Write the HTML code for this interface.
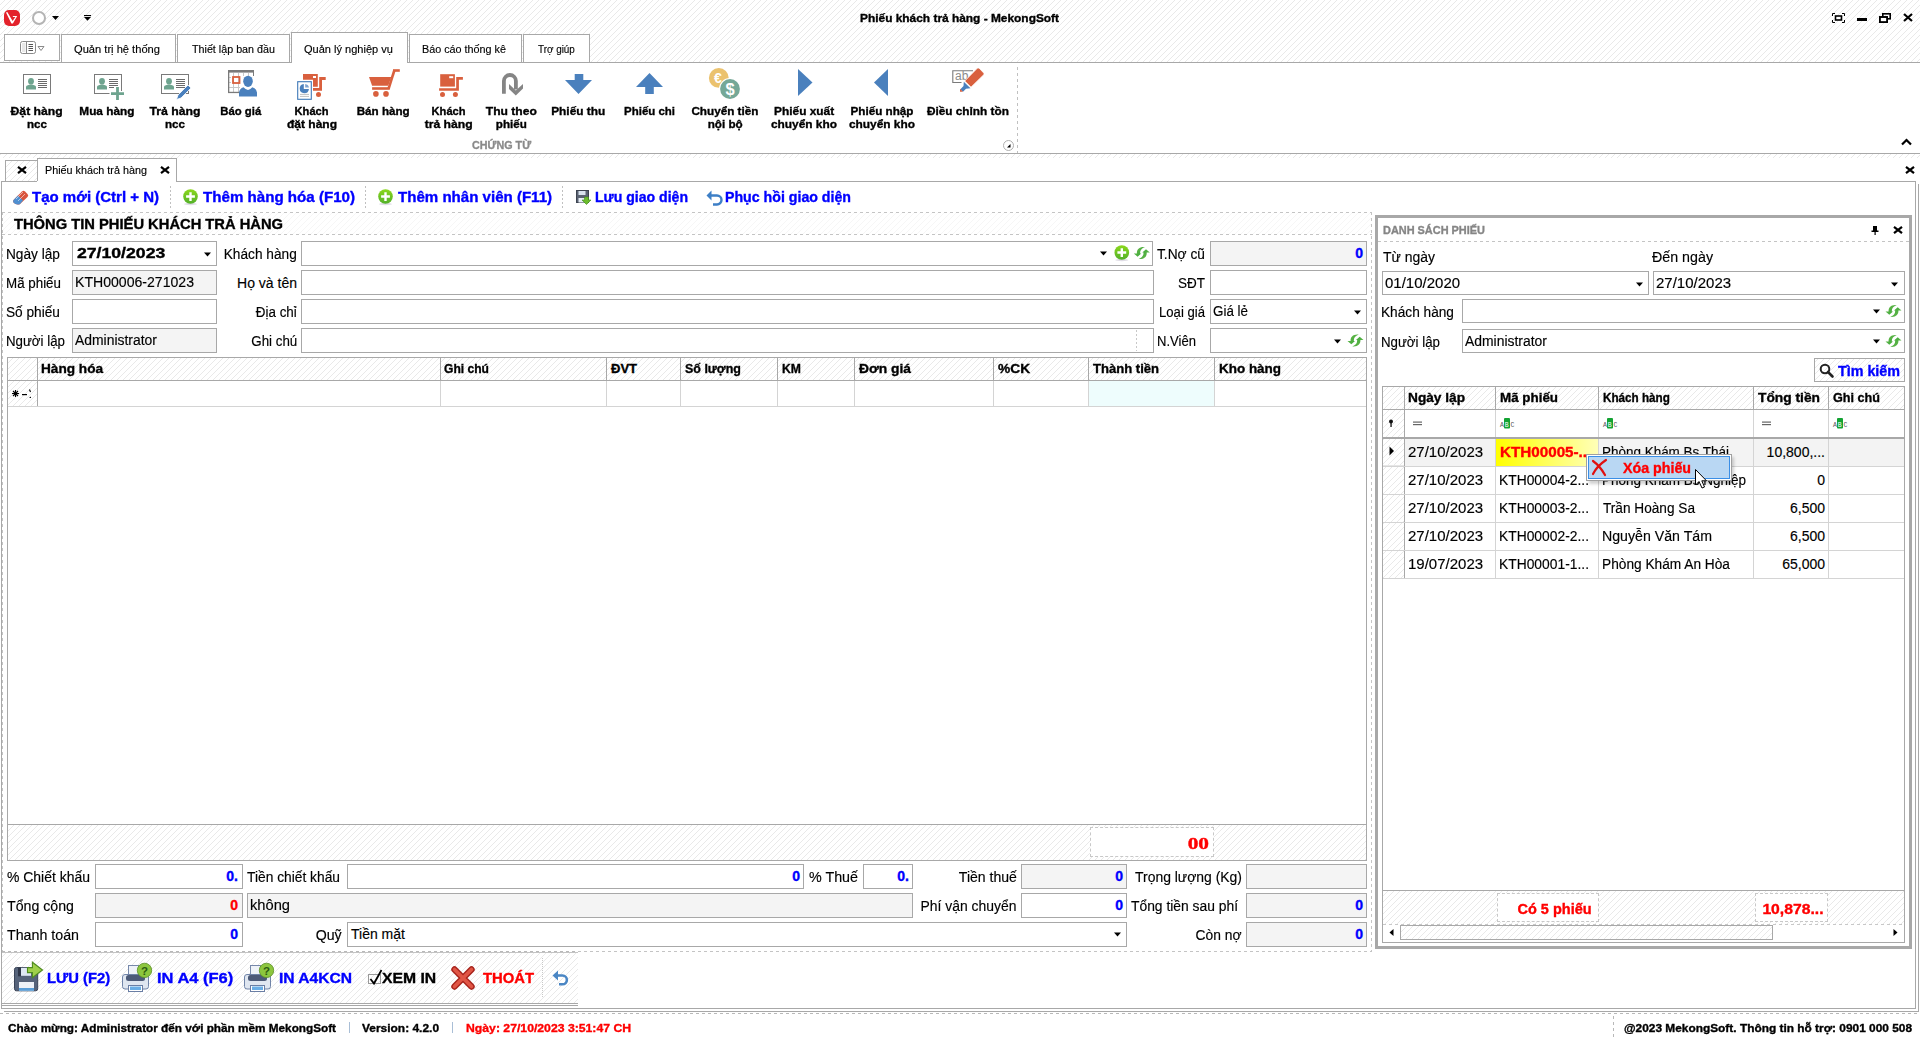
<!DOCTYPE html><html><head><meta charset="utf-8"><style>
html,body{margin:0;padding:0}
body{width:1920px;height:1040px;overflow:hidden;position:relative;background:#fff;font-family:"Liberation Sans",sans-serif;color:#000}
.a{position:absolute;box-sizing:border-box}
svg.a{overflow:visible}
</style></head><body>
<svg width="0" height="0" style="position:absolute"><defs><pattern id="hp" width="6" height="6" patternUnits="userSpaceOnUse"><g fill="#e9e9e9" shape-rendering="crispEdges"><rect x="4" y="0" width="1" height="1"/><rect x="3" y="1" width="1" height="1"/><rect x="2" y="2" width="1" height="1"/><rect x="1" y="3" width="1" height="1"/><rect x="0" y="4" width="1" height="1"/><rect x="5" y="5" width="1" height="1"/></g></pattern><pattern id="hp2" width="6" height="6" patternUnits="userSpaceOnUse"><g fill="#f6f6f6" shape-rendering="crispEdges"><rect x="4" y="0" width="1" height="1"/><rect x="3" y="1" width="1" height="1"/><rect x="2" y="2" width="1" height="1"/><rect x="1" y="3" width="1" height="1"/><rect x="0" y="4" width="1" height="1"/><rect x="5" y="5" width="1" height="1"/></g></pattern><linearGradient id="gplus" x1="0" y1="0" x2="0" y2="1"><stop offset="0" stop-color="#8cd81c"/><stop offset="1" stop-color="#52b02a"/></linearGradient><linearGradient id="grefr" x1="0" y1="0" x2="1" y2="1"><stop offset="0" stop-color="#6ab84a"/><stop offset="1" stop-color="#38a83a"/></linearGradient></defs></svg>
<svg class="a" style="left:0;top:0" width="1920" height="1040"><rect x="0" y="0" width="1920" height="62" fill="url(#hp)"/></svg>
<div class="a" style="left:4px;top:10px;width:16px;height:16px;background:#e3222b;border-radius:5px"></div>
<svg class="a" style="left:4px;top:10px;" width="16" height="16" viewBox="0 0 16 16"><path d="M2 2.6 L3.3 2 L8.6 11 L11.4 7 H8.6 L9.2 5.9 H13.2 L8.9 13.6 H7.4 Z" fill="#fff"/></svg>
<div class="a" style="left:32px;top:11px;width:14px;height:14px;border:2px solid #b4b4b4;border-radius:50%;background:#fff"></div>
<svg class="a" style="left:52px;top:16px;" width="8" height="5" viewBox="0 0 8 5"><path d="M0 0 L7 0 L3.5 4 Z" fill="#000"/></svg>
<svg class="a" style="left:84px;top:15px;" width="8" height="7" viewBox="0 0 8 7"><rect x="0" y="0" width="7" height="1.1" fill="#000"/><path d="M0 2 L7 2 L3.5 5.8 Z" fill="#000"/></svg>
<div id="t9acf1690a6" class="a" style="left:860px;top:12px;font-size:11.5px;font-weight:bold;color:#000;white-space:nowrap;line-height:normal;transform:scaleX(1.0349);transform-origin:left;-webkit-text-stroke:0.35px #000;">Phiếu khách trả hàng - MekongSoft</div>
<svg class="a" style="left:1832px;top:13px;" width="13" height="10" viewBox="0 0 13 10"><path d="M0.5 3 V0.5 H3 M10 0.5 H12.5 V3 M12.5 7 V9.5 H10 M3 9.5 H0.5 V7" stroke="#000" stroke-width="1" fill="none"/><rect x="3.5" y="3" width="6" height="4" stroke="#000" stroke-width="1.6" fill="none"/></svg>
<div class="a" style="left:1857px;top:18px;width:10px;height:3px;background:#000;"></div>
<svg class="a" style="left:1879px;top:13px;" width="12" height="10" viewBox="0 0 12 10"><rect x="3.8" y="0.8" width="7.4" height="5" stroke="#000" stroke-width="1.6" fill="none"/><rect x="0.8" y="4" width="7.4" height="5.2" stroke="#000" stroke-width="1.6" fill="#fff"/><rect x="0.8" y="4" width="7.4" height="5.2" stroke="#000" stroke-width="1.6" fill="none"/></svg>
<svg class="a" style="left:1903px;top:13px;" width="10" height="9" viewBox="0 0 10 9"><path d="M1 1 L9 8 M9 1 L1 8" stroke="#000" stroke-width="2.2"/></svg>
<div class="a" style="left:0px;top:62px;width:1920px;height:1px;background:#a8a8a8;"></div>
<div class="a" style="left:4px;top:34px;width:56px;height:27px;border:1px solid #a8a8a8;background:#fff;"></div>
<svg class="a" style="left:20px;top:41px;" width="26" height="14" viewBox="0 0 26 14"><rect x="0.5" y="0.5" width="15" height="12" rx="2" fill="#fff" stroke="#8a8a8a"/><rect x="2" y="2" width="3.5" height="9" fill="#e8e8e8"/><line x1="6.5" y1="0.5" x2="6.5" y2="12.5" stroke="#8a8a8a"/><g stroke="#555"><line x1="8.5" y1="3.5" x2="13" y2="3.5"/><line x1="8.5" y1="5.5" x2="13" y2="5.5"/><line x1="8.5" y1="7.5" x2="13" y2="7.5"/><line x1="8.5" y1="9.5" x2="13" y2="9.5"/></g><path d="M18 5.5 L24 5.5 L21 9.5 Z" fill="#fff" stroke="#8a8a8a"/></svg>
<div class="a" style="left:61px;top:34px;width:115px;height:28px;border:1px solid #a8a8a8;border-bottom:none;background:#fff"></div>
<div id="tf01adc5968" class="a" style="left:74px;top:42.5px;font-size:11.5px;font-weight:normal;color:#000;white-space:nowrap;line-height:normal;transform:scaleX(0.9673);transform-origin:left;-webkit-text-stroke:0.15px #000;">Quản trị hệ thống</div>
<div class="a" style="left:177px;top:34px;width:113px;height:28px;border:1px solid #a8a8a8;border-bottom:none;background:#fff"></div>
<div id="tb4634eaf07" class="a" style="left:192px;top:42.5px;font-size:11.5px;font-weight:normal;color:#000;white-space:nowrap;line-height:normal;transform:scaleX(0.9331);transform-origin:left;-webkit-text-stroke:0.15px #000;">Thiết lập ban đầu</div>
<div class="a" style="left:291px;top:32px;width:117px;height:31px;border:1px solid #a8a8a8;border-bottom:none;background:#fff"></div>
<div id="t880712f308" class="a" style="left:304px;top:42.5px;font-size:11.5px;font-weight:normal;color:#000;white-space:nowrap;line-height:normal;transform:scaleX(0.9596);transform-origin:left;-webkit-text-stroke:0.15px #000;">Quản lý nghiệp vụ</div>
<div class="a" style="left:409px;top:34px;width:113px;height:28px;border:1px solid #a8a8a8;border-bottom:none;background:#fff"></div>
<div id="t1de477bee1" class="a" style="left:422px;top:42.5px;font-size:11.5px;font-weight:normal;color:#000;white-space:nowrap;line-height:normal;transform:scaleX(0.9377);transform-origin:left;-webkit-text-stroke:0.15px #000;">Báo cáo thống kê</div>
<div class="a" style="left:523px;top:34px;width:67px;height:28px;border:1px solid #a8a8a8;border-bottom:none;background:#fff"></div>
<div id="t7ae4ae71cf" class="a" style="left:538px;top:42.5px;font-size:11.5px;font-weight:normal;color:#000;white-space:nowrap;line-height:normal;transform:scaleX(0.8591);transform-origin:left;-webkit-text-stroke:0.15px #000;">Trợ giúp</div>
<div class="a" style="left:0px;top:63px;width:1920px;height:90px;background:#fff;"></div>
<div class="a" style="left:0px;top:153px;width:1920px;height:1px;background:#a8a8a8;"></div>
<div class="a" style="left:-463px;width:1000px;text-align:center;top:105px;font-size:11.5px;font-weight:bold;color:#000;white-space:nowrap;line-height:normal;-webkit-text-stroke:0.35px #000;"><span id="t55a9dc4afd" style="display:inline-block;transform:scaleX(1.0580);transform-origin:center;">Đặt hàng</span></div>
<div class="a" style="left:-463px;width:1000px;text-align:center;top:117.5px;font-size:11.5px;font-weight:bold;color:#000;white-space:nowrap;line-height:normal;-webkit-text-stroke:0.35px #000;"><span id="t231f23aa69" style="display:inline-block;transform:scaleX(1.0091);transform-origin:center;">ncc</span></div>
<div class="a" style="left:-393px;width:1000px;text-align:center;top:105px;font-size:11.5px;font-weight:bold;color:#000;white-space:nowrap;line-height:normal;-webkit-text-stroke:0.35px #000;"><span id="tdae9a6cce8" style="display:inline-block;transform:scaleX(1.0252);transform-origin:center;">Mua hàng</span></div>
<div class="a" style="left:-325px;width:1000px;text-align:center;top:105px;font-size:11.5px;font-weight:bold;color:#000;white-space:nowrap;line-height:normal;-webkit-text-stroke:0.35px #000;"><span id="ta89ea311f0" style="display:inline-block;transform:scaleX(1.0652);transform-origin:center;">Trả hàng</span></div>
<div class="a" style="left:-325px;width:1000px;text-align:center;top:117.5px;font-size:11.5px;font-weight:bold;color:#000;white-space:nowrap;line-height:normal;-webkit-text-stroke:0.35px #000;"><span id="tcacfb6517b" style="display:inline-block;transform:scaleX(1.0091);transform-origin:center;">ncc</span></div>
<div class="a" style="left:-259px;width:1000px;text-align:center;top:105px;font-size:11.5px;font-weight:bold;color:#000;white-space:nowrap;line-height:normal;-webkit-text-stroke:0.35px #000;"><span id="t0cdbebff42" style="display:inline-block;transform:scaleX(0.9865);transform-origin:center;">Báo giá</span></div>
<div class="a" style="left:-188px;width:1000px;text-align:center;top:105px;font-size:11.5px;font-weight:bold;color:#000;white-space:nowrap;line-height:normal;-webkit-text-stroke:0.35px #000;"><span id="td6917ba26a" style="display:inline-block;transform:scaleX(0.9661);transform-origin:center;">Khách</span></div>
<div class="a" style="left:-188px;width:1000px;text-align:center;top:117.5px;font-size:11.5px;font-weight:bold;color:#000;white-space:nowrap;line-height:normal;-webkit-text-stroke:0.35px #000;"><span id="te2b9d258f3" style="display:inline-block;transform:scaleX(1.0443);transform-origin:center;">đặt hàng</span></div>
<div class="a" style="left:-117px;width:1000px;text-align:center;top:105px;font-size:11.5px;font-weight:bold;color:#000;white-space:nowrap;line-height:normal;-webkit-text-stroke:0.35px #000;"><span id="tada9c68e19" style="display:inline-block;transform:scaleX(1.0119);transform-origin:center;">Bán hàng</span></div>
<div class="a" style="left:-51px;width:1000px;text-align:center;top:105px;font-size:11.5px;font-weight:bold;color:#000;white-space:nowrap;line-height:normal;-webkit-text-stroke:0.35px #000;"><span id="t31ae3468ef" style="display:inline-block;transform:scaleX(0.9661);transform-origin:center;">Khách</span></div>
<div class="a" style="left:-51px;width:1000px;text-align:center;top:117.5px;font-size:11.5px;font-weight:bold;color:#000;white-space:nowrap;line-height:normal;-webkit-text-stroke:0.35px #000;"><span id="tea96763d51" style="display:inline-block;transform:scaleX(1.0592);transform-origin:center;">trả hàng</span></div>
<div class="a" style="left:11px;width:1000px;text-align:center;top:105px;font-size:11.5px;font-weight:bold;color:#000;white-space:nowrap;line-height:normal;-webkit-text-stroke:0.35px #000;"><span id="t77398556a0" style="display:inline-block;transform:scaleX(1.0516);transform-origin:center;">Thu theo</span></div>
<div class="a" style="left:11px;width:1000px;text-align:center;top:117.5px;font-size:11.5px;font-weight:bold;color:#000;white-space:nowrap;line-height:normal;-webkit-text-stroke:0.35px #000;"><span id="tab5888f793" style="display:inline-block;transform:scaleX(1.0111);transform-origin:center;">phiếu</span></div>
<div class="a" style="left:78px;width:1000px;text-align:center;top:105px;font-size:11.5px;font-weight:bold;color:#000;white-space:nowrap;line-height:normal;-webkit-text-stroke:0.35px #000;"><span id="tebc02f1db3" style="display:inline-block;transform:scaleX(1.0313);transform-origin:center;">Phiếu thu</span></div>
<div class="a" style="left:150px;width:1000px;text-align:center;top:105px;font-size:11.5px;font-weight:bold;color:#000;white-space:nowrap;line-height:normal;-webkit-text-stroke:0.35px #000;"><span id="t1d22867a31" style="display:inline-block;transform:scaleX(0.9975);transform-origin:center;">Phiếu chi</span></div>
<div class="a" style="left:225px;width:1000px;text-align:center;top:105px;font-size:11.5px;font-weight:bold;color:#000;white-space:nowrap;line-height:normal;-webkit-text-stroke:0.35px #000;"><span id="tc2b760e256" style="display:inline-block;transform:scaleX(1.0183);transform-origin:center;">Chuyển tiền</span></div>
<div class="a" style="left:225px;width:1000px;text-align:center;top:117.5px;font-size:11.5px;font-weight:bold;color:#000;white-space:nowrap;line-height:normal;-webkit-text-stroke:0.35px #000;"><span id="t822d6a9389" style="display:inline-block;transform:scaleX(1.0149);transform-origin:center;">nội bộ</span></div>
<div class="a" style="left:304px;width:1000px;text-align:center;top:105px;font-size:11.5px;font-weight:bold;color:#000;white-space:nowrap;line-height:normal;-webkit-text-stroke:0.35px #000;"><span id="tdf53e3e145" style="display:inline-block;transform:scaleX(1.0323);transform-origin:center;">Phiếu xuất</span></div>
<div class="a" style="left:304px;width:1000px;text-align:center;top:117.5px;font-size:11.5px;font-weight:bold;color:#000;white-space:nowrap;line-height:normal;-webkit-text-stroke:0.35px #000;"><span id="t859ec4969e" style="display:inline-block;transform:scaleX(1.0333);transform-origin:center;">chuyển kho</span></div>
<div class="a" style="left:382px;width:1000px;text-align:center;top:105px;font-size:11.5px;font-weight:bold;color:#000;white-space:nowrap;line-height:normal;-webkit-text-stroke:0.35px #000;"><span id="te16a439aa1" style="display:inline-block;transform:scaleX(1.0167);transform-origin:center;">Phiếu nhập</span></div>
<div class="a" style="left:382px;width:1000px;text-align:center;top:117.5px;font-size:11.5px;font-weight:bold;color:#000;white-space:nowrap;line-height:normal;-webkit-text-stroke:0.35px #000;"><span id="tb4d15a2058" style="display:inline-block;transform:scaleX(1.0333);transform-origin:center;">chuyển kho</span></div>
<div class="a" style="left:468px;width:1000px;text-align:center;top:105px;font-size:11.5px;font-weight:bold;color:#000;white-space:nowrap;line-height:normal;-webkit-text-stroke:0.35px #000;"><span id="t8eaa29afa5" style="display:inline-block;transform:scaleX(1.0271);transform-origin:center;">Điều chỉnh tồn</span></div>
<div class="a" style="left:2px;width:1000px;text-align:center;top:139px;font-size:11.5px;font-weight:bold;color:#8a8a8a;white-space:nowrap;line-height:normal;-webkit-text-stroke:0.35px #8a8a8a;"><span id="t2bfa6932de" style="display:inline-block;transform:scaleX(0.9329);transform-origin:center;">CHỨNG TỪ</span></div>
<div class="a" style="left:1017px;top:67px;width:1px;height:86px;background:repeating-linear-gradient(180deg,#c0c0c0 0 3px,transparent 3px 6px)"></div>
<div class="a" style="left:1003px;top:140px;width:11px;height:11px;border:1px solid #b0b0b0;border-radius:50%"></div>
<svg class="a" style="left:1006px;top:143px;" width="6" height="6" viewBox="0 0 6 6"><path d="M4.5 1 L4.5 4.5 L1 4.5 Z" fill="#000"/></svg>
<svg class="a" style="left:1901px;top:138px;" width="11" height="8" viewBox="0 0 11 8"><path d="M1 6.5 L5.5 2 L10 6.5" stroke="#000" stroke-width="2.2" fill="none"/></svg>
<svg class="a" style="left:0;top:0" width="1920" height="1040" viewBox="0 0 1920 1040"><rect x="23.5" y="74.5" width="27" height="19" fill="#fff" stroke="#7a7a7a"/><ellipse cx="31" cy="81.3" rx="2.9" ry="3.2" fill="#6ea48f"/><path d="M26 89.5 V86.8 Q26 85.6 28.5 85 L30 84.6 H32 L33.5 85 Q36 85.6 36 86.8 V89.5 Z" fill="#6ea48f"/><line x1="38" x2="47" y1="79.5" y2="79.5" stroke="#6a6a6a"/><line x1="38" x2="47" y1="81.5" y2="81.5" stroke="#6a6a6a"/><line x1="38" x2="47" y1="83.5" y2="83.5" stroke="#6a6a6a"/><line x1="38" x2="47" y1="85.5" y2="85.5" stroke="#6a6a6a"/><line x1="38" x2="47" y1="87.5" y2="87.5" stroke="#6a6a6a"/><rect x="94.5" y="74.5" width="27" height="19" fill="#fff" stroke="#7a7a7a"/><ellipse cx="102" cy="81.3" rx="2.9" ry="3.2" fill="#6ea48f"/><path d="M97 89.5 V86.8 Q97 85.6 99.5 85 L101 84.6 H103 L104.5 85 Q107 85.6 107 86.8 V89.5 Z" fill="#6ea48f"/><line x1="109" x2="118" y1="79.5" y2="79.5" stroke="#6a6a6a"/><line x1="109" x2="118" y1="81.5" y2="81.5" stroke="#6a6a6a"/><line x1="109" x2="118" y1="83.5" y2="83.5" stroke="#6a6a6a"/><line x1="109" x2="118" y1="85.5" y2="85.5" stroke="#6a6a6a"/><line x1="109" x2="118" y1="87.5" y2="87.5" stroke="#6a6a6a"/><path d="M109.5 93.5 H123 M116.5 86.5 V100" stroke="#fff" stroke-width="5"/><path d="M111 93.6 H124 M117.5 87 V100" stroke="#6ea48f" stroke-width="2.8"/><rect x="161.5" y="74.5" width="27" height="19" fill="#fff" stroke="#7a7a7a"/><ellipse cx="169" cy="81.3" rx="2.9" ry="3.2" fill="#6ea48f"/><path d="M164 89.5 V86.8 Q164 85.6 166.5 85 L168 84.6 H170 L171.5 85 Q174 85.6 174 86.8 V89.5 Z" fill="#6ea48f"/><line x1="176" x2="185" y1="79.5" y2="79.5" stroke="#6a6a6a"/><line x1="176" x2="185" y1="81.5" y2="81.5" stroke="#6a6a6a"/><line x1="176" x2="185" y1="83.5" y2="83.5" stroke="#6a6a6a"/><line x1="176" x2="185" y1="85.5" y2="85.5" stroke="#6a6a6a"/><line x1="176" x2="185" y1="87.5" y2="87.5" stroke="#6a6a6a"/><path d="M176.5 99.5 L178 95 L188 85 L191 88 L181 98 Z" fill="#4a80bd" stroke="#fff" stroke-width="0.8"/><g stroke="#c8c8c8" stroke-width="1"><line x1="229" y1="87.5" x2="240" y2="87.5"/><line x1="233.5" y1="73" x2="233.5" y2="92"/><line x1="238.5" y1="73" x2="238.5" y2="92"/><line x1="243.5" y1="73" x2="243.5" y2="76"/><line x1="248.5" y1="73" x2="248.5" y2="76"/><line x1="229" y1="77.5" x2="231" y2="77.5"/><line x1="229" y1="82.5" x2="231" y2="82.5"/></g><rect x="228" y="70" width="26" height="2.6" fill="#7a7a7a"/><rect x="228" y="70" width="1.3" height="23" fill="#7a7a7a"/><rect x="228" y="91.8" width="12" height="1.3" fill="#7a7a7a"/><rect x="253" y="70" width="1" height="6" fill="#7a7a7a"/><rect x="233" y="77" width="6.5" height="6" fill="none" stroke="#d9603e" stroke-width="1.8"/><ellipse cx="248" cy="81.3" rx="4.8" ry="5.6" fill="#4a80bd"/><path d="M239 96.6 V92.5 Q239.5 88.5 243.5 87.3 Q246 90 248 90 Q250 90 252.3 87.3 Q256.5 88.5 257 92.5 V96.6 Z" fill="#4a80bd"/><rect x="440.2" y="74.2" width="14.7" height="12.4" fill="#d9603e"/><rect x="449.2" y="76.2" width="4" height="2" fill="#fff"/><path d="M456.2 88.2 V77.10000000000001 H462.9 V79.8 H458.9 V90.80000000000001 H439.09999999999997 V88.2 Z" fill="#d9603e"/><circle cx="442.5" cy="94.5" r="2.5" fill="#d9603e"/><circle cx="455.4" cy="94.5" r="2.5" fill="#d9603e"/><path d="M303 74.1 H317.8 V86.8 H313 V79.8 H303 Z" fill="#d9603e"/><rect x="313" y="76" width="3" height="2" fill="#fff"/><path d="M319.2 90.7 V77 H325.7 V80 H322 V90.7 H313 V88.1 H319.2 Z" fill="#d9603e"/><circle cx="318.5" cy="94.5" r="2.5" fill="#d9603e"/><rect x="297.7" y="81.7" width="13.6" height="17.6" fill="#fff" stroke="#3f79b8" stroke-width="1.1"/><path d="M303.8 84 V88.9 H308.9 A4.6 4.6 0 1 1 303.8 84 Z" fill="#4a80bd"/><path d="M305.2 84 A4.5 4.5 0 0 1 309 87.6 H305.2 Z" fill="#7ea3cf"/><line x1="300" y1="94.4" x2="309" y2="94.4" stroke="#c0c0c0"/><line x1="300" y1="96.4" x2="309" y2="96.4" stroke="#c0c0c0"/><path d="M369 77.1 H391.3 L388.2 85.8 H372.1 Z" fill="#d9603e"/><path d="M394.3 70.5 L388.5 89" stroke="#d9603e" stroke-width="2.6"/><rect x="393" y="69.2" width="6.8" height="2.6" fill="#d9603e"/><rect x="372.1" y="87.2" width="17.5" height="2.6" fill="#d9603e"/><circle cx="375.9" cy="93.9" r="2.8" fill="#d9603e"/><circle cx="386" cy="93.9" r="2.8" fill="#d9603e"/><path d="M503.9 93.8 V81 A6 6 0 0 1 515.9 81 V89.5" stroke="#858585" stroke-width="3.8" fill="none"/><path d="M509 84 L515.8 90.6 L523 84 V88.6 L515.8 95.6 L509 88.9 Z" fill="#858585"/><path d="M574.7 74 H583.3 V80 H592 L578.5 94 L565 80 H574.7 Z" fill="#4a80bd"/><path d="M645.2 94 H653.8 V87 H663 L649.5 73 L636 87 H645.2 Z" fill="#4a80bd"/><circle cx="718.8" cy="77.9" r="9.9" fill="#ebc26e"/><circle cx="730" cy="89" r="11" fill="#fff"/><circle cx="730" cy="89" r="9.9" fill="#75a897"/><text x="718" y="82.8" font-size="14" font-weight="bold" fill="#fff" text-anchor="middle" font-family="Liberation Sans">€</text><text x="730.2" y="94.6" font-size="16.5" font-weight="bold" fill="#fff" text-anchor="middle" font-family="Liberation Sans">$</text><path d="M798 69 L812.5 82.5 L798 96 Z" fill="#4a80bd"/><path d="M888 69 L874 82.5 L888 96 Z" fill="#4a80bd"/><path d="M961.5 82.5 H952.8 V70.8 H973" fill="none" stroke="#7a7a7a" stroke-width="1.1"/><text x="955" y="80" font-size="12" fill="#8a8a8a" font-family="Liberation Sans">ab</text><path d="M964.7 81 L977.5 68 H979 L984 73.3 V74.5 L971 87.2 Z" fill="#d9603e" stroke="#fff" stroke-width="0.8"/><path d="M963.8 81.8 L970.5 88.2 L966 88.8 L963 91.8 L960.2 89.4 L963.5 86 Z" fill="#4a80bd"/><path d="M960 88.8 L963 91.8 H960 Z" fill="#d9603e"/></svg>
<svg class="a" style="left:0;top:0" width="1920" height="1040"><rect x="0" y="154" width="1920" height="4" fill="url(#hp)"/></svg>
<div class="a" style="left:5px;top:160px;width:33px;height:22px;border:1px solid #a8a8a8;border-bottom:none;background:#fff"></div>
<svg class="a" style="left:0;top:0" width="1920" height="1040"><rect x="6" y="161" width="31" height="20" fill="url(#hp)"/></svg>
<div class="a" style="left:37px;top:158px;width:140px;height:24px;border:1px solid #a8a8a8;border-bottom:none;background:#fff"></div>
<svg class="a" style="left:17px;top:166px;" width="10" height="8" viewBox="0 0 10 8"><path d="M1 0.8 L9 7.2 M9 0.8 L1 7.2" stroke="#000" stroke-width="2.2"/></svg>
<div id="t5c109f1d9e" class="a" style="left:45px;top:164px;font-size:11.5px;font-weight:normal;color:#000;white-space:nowrap;line-height:normal;transform:scaleX(0.9378);transform-origin:left;-webkit-text-stroke:0.15px #000;">Phiếu khách trả hàng</div>
<svg class="a" style="left:160px;top:166px;" width="10" height="8" viewBox="0 0 10 8"><path d="M1 0.8 L9 7.2 M9 0.8 L1 7.2" stroke="#000" stroke-width="2.2"/></svg>
<svg class="a" style="left:1905px;top:166px;" width="10" height="8" viewBox="0 0 10 8"><path d="M1 0.8 L9 7.2 M9 0.8 L1 7.2" stroke="#000" stroke-width="2.2"/></svg>
<div class="a" style="left:1px;top:181px;width:176px;height:1px;background:#a8a8a8;"></div>
<div class="a" style="left:176px;top:181px;width:1740px;height:1px;background:#a8a8a8;"></div>
<div class="a" style="left:37px;top:181px;width:1px;height:1px;background:#fff;"></div>
<div class="a" style="left:38px;top:181px;width:138px;height:1px;background:#fff;"></div>
<div class="a" style="left:1px;top:181px;width:1px;height:828px;background:#a8a8a8;"></div>
<div class="a" style="left:1915px;top:181px;width:1px;height:828px;background:#a8a8a8;"></div>
<div class="a" style="left:1918px;top:184px;width:1px;height:828px;background:#a8a8a8;"></div>
<div class="a" style="left:1px;top:1008px;width:1915px;height:1px;background:#a8a8a8;"></div>
<div class="a" style="left:4px;top:1011px;width:1915px;height:1px;background:#a8a8a8;"></div>
<svg class="a" style="left:0;top:0" width="1920" height="1040" viewBox="0 0 1920 1040"><g transform="translate(13,190)"><path d="M1 9.5 L9 1.5 Q10.5 0 12 1.5 L14.5 4 Q16 5.5 14.5 7 L7 14 Q6 14.8 4.5 14.5 L2.5 14 Q0 13 0 11 Z" fill="#d9543c"/><path d="M1 9.5 L5 5.5 L10 10.5 L7 14 Q6 14.8 4.5 14.5 L2.5 14 Q0 13 0 11 Z" fill="#4f8fd0"/><path d="M3 9 L10 2 M5 11 L12 4" stroke="#fff" stroke-width="0.9" opacity="0.6"/></g><ellipse cx="190.5" cy="204.0" rx="6.5" ry="1.2" fill="#d8d4e0" opacity="0.8"/><circle cx="190.5" cy="196.5" r="7.3" fill="url(#gplus)"/><path d="M186.1 196.5 H194.9 M190.5 192.2 V201.0" stroke="#fff" stroke-width="2.4"/><ellipse cx="385.5" cy="204.0" rx="6.5" ry="1.2" fill="#d8d4e0" opacity="0.8"/><circle cx="385.5" cy="196.5" r="7.3" fill="url(#gplus)"/><path d="M381.1 196.5 H389.9 M385.5 192.2 V201.0" stroke="#fff" stroke-width="2.4"/><g transform="translate(576,190)"><rect x="0.5" y="0.5" width="12" height="12" fill="#5a6272" stroke="#3c4350"/><rect x="2.5" y="1" width="7" height="4" fill="#d8e2ee"/><rect x="2.5" y="8" width="8" height="4.5" fill="#e8eef6"/><path d="M8.5 7 H12.5 V10 H15 L10.5 14.5 L6 10 H8.5 Z" fill="#6cbc2c" stroke="#3c8a1c" stroke-width="0.6"/></g><path d="M710 195.5 H717 A4.5 4.5 0 0 1 717 204.5 H713" stroke="#3d7fc6" stroke-width="2.4" fill="none"/><path d="M706.5 195.5 L711.5 190.5 V200.5 Z" fill="#3d7fc6"/></svg>
<div id="t37e34caacc" class="a" style="left:32px;top:189px;font-size:14px;font-weight:bold;color:#0000ff;white-space:nowrap;line-height:normal;transform:scaleX(1.0726);transform-origin:left;-webkit-text-stroke:0.35px #0000ff;">Tạo mới (Ctrl + N)</div>
<div id="ta052397b76" class="a" style="left:203px;top:189px;font-size:14px;font-weight:bold;color:#0000ff;white-space:nowrap;line-height:normal;transform:scaleX(1.0801);transform-origin:left;-webkit-text-stroke:0.35px #0000ff;">Thêm hàng hóa (F10)</div>
<div id="tb8971b6aa7" class="a" style="left:398px;top:189px;font-size:14px;font-weight:bold;color:#0000ff;white-space:nowrap;line-height:normal;transform:scaleX(1.0764);transform-origin:left;-webkit-text-stroke:0.35px #0000ff;">Thêm nhân viên (F11)</div>
<div id="t8f6391b8eb" class="a" style="left:595px;top:189px;font-size:14px;font-weight:bold;color:#0000ff;white-space:nowrap;line-height:normal;transform:scaleX(1.0044);transform-origin:left;-webkit-text-stroke:0.35px #0000ff;">Lưu giao diện</div>
<div id="tf4bf41d49b" class="a" style="left:725px;top:189px;font-size:14px;font-weight:bold;color:#0000ff;white-space:nowrap;line-height:normal;transform:scaleX(1.0125);transform-origin:left;-webkit-text-stroke:0.35px #0000ff;">Phục hồi giao diện</div>
<div class="a" style="left:170px;top:186px;width:1px;height:23px;background:repeating-linear-gradient(180deg,#c0c0c0 0 2px,transparent 2px 4px)"></div>
<div class="a" style="left:365px;top:186px;width:1px;height:23px;background:repeating-linear-gradient(180deg,#c0c0c0 0 2px,transparent 2px 4px)"></div>
<div class="a" style="left:562px;top:186px;width:1px;height:23px;background:repeating-linear-gradient(180deg,#c0c0c0 0 2px,transparent 2px 4px)"></div>
<div class="a" style="left:2px;top:212px;width:1370px;height:1px;background:repeating-linear-gradient(90deg,#c4c4c4 0 3px,transparent 3px 6px)"></div>
<svg class="a" style="left:0;top:0" width="1920" height="1040"><rect x="3" y="213" width="1368" height="21" fill="url(#hp2)"/></svg>
<div class="a" style="left:2px;top:234px;width:1370px;height:1px;background:repeating-linear-gradient(90deg,#c4c4c4 0 3px,transparent 3px 6px)"></div>
<div class="a" style="left:2px;top:212px;width:1px;height:740px;background:repeating-linear-gradient(180deg,#c4c4c4 0 3px,transparent 3px 6px)"></div>
<div class="a" style="left:1371px;top:212px;width:1px;height:740px;background:repeating-linear-gradient(180deg,#c4c4c4 0 3px,transparent 3px 6px)"></div>
<div class="a" style="left:2px;top:951px;width:1370px;height:1px;background:repeating-linear-gradient(90deg,#c4c4c4 0 3px,transparent 3px 6px)"></div>
<div id="t560496b2e6" class="a" style="left:14px;top:216px;font-size:14px;font-weight:bold;color:#000;white-space:nowrap;line-height:normal;transform:scaleX(1.0514);transform-origin:left;-webkit-text-stroke:0.35px #000;">THÔNG TIN PHIẾU KHÁCH TRẢ HÀNG</div>
<div id="tafaf20e180" class="a" style="left:6px;top:246px;font-size:14px;font-weight:normal;color:#000;white-space:nowrap;line-height:normal;transform:scaleX(0.9767);transform-origin:left;-webkit-text-stroke:0.15px #000;">Ngày lập</div>
<div id="t20781a275e" class="a" style="left:6px;top:275px;font-size:14px;font-weight:normal;color:#000;white-space:nowrap;line-height:normal;transform:scaleX(0.9542);transform-origin:left;-webkit-text-stroke:0.15px #000;">Mã phiếu</div>
<div id="t174889c864" class="a" style="left:6px;top:304px;font-size:14px;font-weight:normal;color:#000;white-space:nowrap;line-height:normal;transform:scaleX(0.9764);transform-origin:left;-webkit-text-stroke:0.15px #000;">Số phiếu</div>
<div id="t8c735c6379" class="a" style="left:6px;top:333px;font-size:14px;font-weight:normal;color:#000;white-space:nowrap;line-height:normal;transform:scaleX(0.9486);transform-origin:left;-webkit-text-stroke:0.15px #000;">Người lập</div>
<div class="a" style="left:72px;top:241px;width:145px;height:25px;border:1px solid #a8a8a8;background:#fff;"></div>
<div id="tc82d08be5d" class="a" style="left:77px;top:245px;font-size:14px;font-weight:bold;color:#000;white-space:nowrap;line-height:normal;transform:scaleX(1.2594);transform-origin:left;-webkit-text-stroke:0.35px #000;">27/10/2023</div>
<svg class="a" style="left:204px;top:252px;" width="8" height="5" viewBox="0 0 8 5"><path d="M0 0.5 H7 L3.5 4.5 Z" fill="#000"/></svg>
<div class="a" style="left:72px;top:270px;width:145px;height:25px;border:1px solid #a8a8a8;background:#f4f4f4;"></div>
<div id="t7639b18e96" class="a" style="left:75px;top:274px;font-size:14px;font-weight:normal;color:#000;white-space:nowrap;line-height:normal;transform:scaleX(1.0059);transform-origin:left;-webkit-text-stroke:0.15px #000;">KTH00006-271023</div>
<div class="a" style="left:72px;top:299px;width:145px;height:25px;border:1px solid #a8a8a8;background:#fff;"></div>
<div class="a" style="left:72px;top:328px;width:145px;height:25px;border:1px solid #a8a8a8;background:#f4f4f4;"></div>
<div id="tae6f8269be" class="a" style="left:75px;top:332px;font-size:14px;font-weight:normal;color:#000;white-space:nowrap;line-height:normal;transform:scaleX(0.9942);transform-origin:left;-webkit-text-stroke:0.15px #000;">Administrator</div>
<div id="tdcc2537988" class="a" style="right:1623px;top:246px;font-size:14px;font-weight:normal;color:#000;white-space:nowrap;line-height:normal;transform:scaleX(0.9765);transform-origin:right;-webkit-text-stroke:0.15px #000;">Khách hàng</div>
<div id="t35ba160672" class="a" style="right:1623px;top:275px;font-size:14px;font-weight:normal;color:#000;white-space:nowrap;line-height:normal;-webkit-text-stroke:0.15px #000;">Họ và tên</div>
<div id="tb72fd84eb8" class="a" style="right:1623px;top:304px;font-size:14px;font-weight:normal;color:#000;white-space:nowrap;line-height:normal;transform:scaleX(0.9570);transform-origin:right;-webkit-text-stroke:0.15px #000;">Địa chỉ</div>
<div id="t4d8457fa50" class="a" style="right:1623px;top:333px;font-size:14px;font-weight:normal;color:#000;white-space:nowrap;line-height:normal;transform:scaleX(0.9524);transform-origin:right;-webkit-text-stroke:0.15px #000;">Ghi chú</div>
<div class="a" style="left:301px;top:241px;width:852px;height:25px;border:1px solid #a8a8a8;background:#fff;"></div>
<svg class="a" style="left:1100px;top:251px;" width="8" height="5" viewBox="0 0 8 5"><path d="M0 0.5 H7 L3.5 4.5 Z" fill="#000"/></svg>
<div class="a" style="left:301px;top:270px;width:853px;height:25px;border:1px solid #a8a8a8;background:#fff;"></div>
<div class="a" style="left:301px;top:299px;width:853px;height:25px;border:1px solid #a8a8a8;background:#fff;"></div>
<div class="a" style="left:301px;top:328px;width:853px;height:25px;border:1px solid #a8a8a8;background:#fff;"></div>
<div class="a" style="left:1136px;top:330px;width:1px;height:21px;background:repeating-linear-gradient(180deg,#c8c8c8 0 2px,transparent 2px 4px)"></div>
<div id="t6dfbf5e4ab" class="a" style="left:1157px;top:246px;font-size:14px;font-weight:normal;color:#000;white-space:nowrap;line-height:normal;transform:scaleX(0.9820);transform-origin:left;-webkit-text-stroke:0.15px #000;">T.Nợ cũ</div>
<div class="a" style="left:1210px;top:241px;width:157px;height:25px;border:1px solid #a8a8a8;background:#f4f4f4;"></div>
<div id="t4a37fd8596" class="a" style="right:557px;top:245px;font-size:14px;font-weight:bold;color:#0000ff;white-space:nowrap;line-height:normal;-webkit-text-stroke:0.35px #0000ff;">0</div>
<div id="t17513087f5" class="a" style="right:715px;top:275px;font-size:14px;font-weight:normal;color:#000;white-space:nowrap;line-height:normal;transform:scaleX(0.9630);transform-origin:right;-webkit-text-stroke:0.15px #000;">SĐT</div>
<div class="a" style="left:1210px;top:270px;width:157px;height:25px;border:1px solid #a8a8a8;background:#fff;"></div>
<div id="t67e4351f64" class="a" style="left:1159px;top:304px;font-size:14px;font-weight:normal;color:#000;white-space:nowrap;line-height:normal;transform:scaleX(0.9366);transform-origin:left;-webkit-text-stroke:0.15px #000;">Loại giá</div>
<div class="a" style="left:1210px;top:299px;width:157px;height:25px;border:1px solid #a8a8a8;background:#fff;"></div>
<div id="t66abcff5bd" class="a" style="left:1213px;top:303px;font-size:14px;font-weight:normal;color:#000;white-space:nowrap;line-height:normal;transform:scaleX(0.9556);transform-origin:left;-webkit-text-stroke:0.15px #000;">Giá lẻ</div>
<svg class="a" style="left:1354px;top:310px;" width="8" height="5" viewBox="0 0 8 5"><path d="M0 0.5 H7 L3.5 4.5 Z" fill="#000"/></svg>
<div id="t70014d11a9" class="a" style="left:1157px;top:333px;font-size:14px;font-weight:normal;color:#000;white-space:nowrap;line-height:normal;transform:scaleX(0.9318);transform-origin:left;-webkit-text-stroke:0.15px #000;">N.Viên</div>
<div class="a" style="left:1210px;top:328px;width:157px;height:25px;border:1px solid #a8a8a8;background:#fff;"></div>
<svg class="a" style="left:1334px;top:339px;" width="8" height="5" viewBox="0 0 8 5"><path d="M0 0.5 H7 L3.5 4.5 Z" fill="#000"/></svg>
<svg class="a" style="left:0;top:0" width="1920" height="1040" viewBox="0 0 1920 1040"><ellipse cx="1121.8" cy="260.0" rx="6.5" ry="1.2" fill="#d8d4e0" opacity="0.8"/><circle cx="1121.8" cy="252.5" r="7.3" fill="url(#gplus)"/><path d="M1117.3999999999999 252.5 H1126.2 M1121.8 248.2 V257.0" stroke="#fff" stroke-width="2.4"/><path d="M1145.0 247 C1139.3 246.4 1136.6 249.5 1136.8999999999999 253.4 H1133.8 L1137.6 256.7 L1141.3 253.4 H1140.1 C1140.0 250.2 1141.6 248.4 1145.0 247 Z" fill="url(#grefr)"/><g transform="rotate(180 1141.8 253)"><path d="M1145.0 247 C1139.3 246.4 1136.6 249.5 1136.8999999999999 253.4 H1133.8 L1137.6 256.7 L1141.3 253.4 H1140.1 C1140.0 250.2 1141.6 248.4 1145.0 247 Z" fill="url(#grefr)"/></g><path d="M1358.7 334.5 C1353.0 333.9 1350.3 337.0 1350.6 340.9 H1347.5 L1351.3 344.2 L1355.0 340.9 H1353.8 C1353.7 337.7 1355.3 335.9 1358.7 334.5 Z" fill="url(#grefr)"/><g transform="rotate(180 1355.5 340.5)"><path d="M1358.7 334.5 C1353.0 333.9 1350.3 337.0 1350.6 340.9 H1347.5 L1351.3 344.2 L1355.0 340.9 H1353.8 C1353.7 337.7 1355.3 335.9 1358.7 334.5 Z" fill="url(#grefr)"/></g></svg>
<div class="a" style="left:7px;top:357px;width:1360px;height:504px;border:1px solid #a8a8a8;background:#fff;"></div>
<svg class="a" style="left:0;top:0" width="1920" height="1040"><rect x="8" y="358" width="1358" height="22" fill="url(#hp)"/></svg>
<div class="a" style="left:7px;top:380px;width:1360px;height:1px;background:#a8a8a8;"></div>
<div class="a" style="left:37px;top:358px;width:1px;height:22px;background:#a8a8a8;"></div>
<div class="a" style="left:440px;top:358px;width:1px;height:22px;background:#a8a8a8;"></div>
<div class="a" style="left:606px;top:358px;width:1px;height:22px;background:#a8a8a8;"></div>
<div class="a" style="left:680px;top:358px;width:1px;height:22px;background:#a8a8a8;"></div>
<div class="a" style="left:777px;top:358px;width:1px;height:22px;background:#a8a8a8;"></div>
<div class="a" style="left:854px;top:358px;width:1px;height:22px;background:#a8a8a8;"></div>
<div class="a" style="left:993px;top:358px;width:1px;height:22px;background:#a8a8a8;"></div>
<div class="a" style="left:1088px;top:358px;width:1px;height:22px;background:#a8a8a8;"></div>
<div class="a" style="left:1214px;top:358px;width:1px;height:22px;background:#a8a8a8;"></div>
<svg class="a" style="left:0;top:0" width="1920" height="1040"><rect x="8" y="381" width="29" height="25" fill="url(#hp)"/></svg>
<div class="a" style="left:37px;top:381px;width:1px;height:25px;background:#a8a8a8;"></div>
<div class="a" style="left:1089px;top:381px;width:125px;height:25px;background:#eefdfd;"></div>
<div class="a" style="left:440px;top:381px;width:1px;height:25px;background:#d4d4d4;"></div>
<div class="a" style="left:606px;top:381px;width:1px;height:25px;background:#d4d4d4;"></div>
<div class="a" style="left:680px;top:381px;width:1px;height:25px;background:#d4d4d4;"></div>
<div class="a" style="left:777px;top:381px;width:1px;height:25px;background:#d4d4d4;"></div>
<div class="a" style="left:854px;top:381px;width:1px;height:25px;background:#d4d4d4;"></div>
<div class="a" style="left:993px;top:381px;width:1px;height:25px;background:#d4d4d4;"></div>
<div class="a" style="left:1088px;top:381px;width:1px;height:25px;background:#d4d4d4;"></div>
<div class="a" style="left:1214px;top:381px;width:1px;height:25px;background:#d4d4d4;"></div>
<div class="a" style="left:8px;top:406px;width:1358px;height:1px;background:#d4d4d4;"></div>
<svg class="a" style="left:0;top:0" width="1920" height="1040" viewBox="0 0 1920 1040"><g stroke="#000" stroke-width="1.1"><path d="M15.5 390 V397 M12 393.5 H19 M13 391 L18 396 M18 391 L13 396"/></g><rect x="22" y="394" width="5" height="1.2" fill="#000"/><path d="M29.5 389.5 L30.5 392" stroke="#000" stroke-width="1.1"/><path d="M29 398 L31 396.5 V398 Z" fill="#000"/></svg>
<div id="t1fe19642c5" class="a" style="left:41px;top:361px;font-size:13px;font-weight:bold;color:#000;white-space:nowrap;line-height:normal;transform:scaleX(1.0475);transform-origin:left;-webkit-text-stroke:0.35px #000;">Hàng hóa</div>
<div id="ta7b6b94466" class="a" style="left:444px;top:361px;font-size:13px;font-weight:bold;color:#000;white-space:nowrap;line-height:normal;transform:scaleX(0.9285);transform-origin:left;-webkit-text-stroke:0.35px #000;">Ghi chú</div>
<div id="te59f204a5e" class="a" style="left:611px;top:361px;font-size:13px;font-weight:bold;color:#000;white-space:nowrap;line-height:normal;-webkit-text-stroke:0.35px #000;">ĐVT</div>
<div id="t7eda370e39" class="a" style="left:685px;top:361px;font-size:13px;font-weight:bold;color:#000;white-space:nowrap;line-height:normal;transform:scaleX(0.9586);transform-origin:left;-webkit-text-stroke:0.35px #000;">Số lượng</div>
<div id="t1f4179b76d" class="a" style="left:782px;top:361px;font-size:13px;font-weight:bold;color:#000;white-space:nowrap;line-height:normal;transform:scaleX(0.9366);transform-origin:left;-webkit-text-stroke:0.35px #000;">KM</div>
<div id="t23993cad7a" class="a" style="left:859px;top:361px;font-size:13px;font-weight:bold;color:#000;white-space:nowrap;line-height:normal;transform:scaleX(1.0632);transform-origin:left;-webkit-text-stroke:0.35px #000;">Đơn giá</div>
<div id="t525b41aa21" class="a" style="left:998px;top:361px;font-size:13px;font-weight:bold;color:#000;white-space:nowrap;line-height:normal;transform:scaleX(1.0564);transform-origin:left;-webkit-text-stroke:0.35px #000;">%CK</div>
<div id="t5182ba560a" class="a" style="left:1093px;top:361px;font-size:13px;font-weight:bold;color:#000;white-space:nowrap;line-height:normal;transform:scaleX(1.0043);transform-origin:left;-webkit-text-stroke:0.35px #000;">Thành tiền</div>
<div id="t0b0e1e2f22" class="a" style="left:1219px;top:361px;font-size:13px;font-weight:bold;color:#000;white-space:nowrap;line-height:normal;transform:scaleX(1.0350);transform-origin:left;-webkit-text-stroke:0.35px #000;">Kho hàng</div>
<div class="a" style="left:7px;top:824px;width:1360px;height:1px;background:#a8a8a8;"></div>
<svg class="a" style="left:0;top:0" width="1920" height="1040"><rect x="8" y="825" width="1358" height="35" fill="url(#hp)"/></svg>
<div class="a" style="left:1090px;top:827px;width:124px;height:30px;border:1px dashed #c8c8c8;background:#fff"></div>
<div id="tba3f2460ba" class="a" style="right:711px;top:835px;font-size:16px;font-weight:bold;color:#ff0000;white-space:nowrap;line-height:normal;transform:scaleX(1.3333);transform-origin:right;-webkit-text-stroke:0.35px #ff0000;font-family:'Liberation Serif',serif;">00</div>
<div id="td240d91af1" class="a" style="left:7px;top:869px;font-size:14px;font-weight:normal;color:#000;white-space:nowrap;line-height:normal;transform:scaleX(0.9966);transform-origin:left;-webkit-text-stroke:0.15px #000;">% Chiết khấu</div>
<div class="a" style="left:95px;top:864px;width:148px;height:25px;border:1px solid #a8a8a8;background:#fff;"></div>
<div id="tafb6c1c315" class="a" style="right:1682px;top:868px;font-size:14px;font-weight:bold;color:#0000ff;white-space:nowrap;line-height:normal;-webkit-text-stroke:0.35px #0000ff;">0.</div>
<div id="t1cd8781f5f" class="a" style="left:247px;top:869px;font-size:14px;font-weight:normal;color:#000;white-space:nowrap;line-height:normal;transform:scaleX(0.9846);transform-origin:left;-webkit-text-stroke:0.15px #000;">Tiền chiết khấu</div>
<div class="a" style="left:347px;top:864px;width:457px;height:25px;border:1px solid #a8a8a8;background:#fff;"></div>
<div id="t0a79bb6a44" class="a" style="right:1120px;top:868px;font-size:14px;font-weight:bold;color:#0000ff;white-space:nowrap;line-height:normal;-webkit-text-stroke:0.35px #0000ff;">0</div>
<div id="t819b16bff4" class="a" style="left:809px;top:869px;font-size:14px;font-weight:normal;color:#000;white-space:nowrap;line-height:normal;transform:scaleX(1.0213);transform-origin:left;-webkit-text-stroke:0.15px #000;">% Thuế</div>
<div class="a" style="left:863px;top:864px;width:50px;height:25px;border:1px solid #a8a8a8;background:#fff;"></div>
<div id="t29955d81a9" class="a" style="right:1011px;top:868px;font-size:14px;font-weight:bold;color:#0000ff;white-space:nowrap;line-height:normal;-webkit-text-stroke:0.35px #0000ff;">0.</div>
<div id="t11806a54ae" class="a" style="right:903px;top:869px;font-size:14px;font-weight:normal;color:#000;white-space:nowrap;line-height:normal;transform:scaleX(1.0025);transform-origin:right;-webkit-text-stroke:0.15px #000;">Tiền thuế</div>
<div class="a" style="left:1021px;top:864px;width:106px;height:25px;border:1px solid #a8a8a8;background:#f4f4f4;"></div>
<div id="tb8c650a443" class="a" style="right:797px;top:868px;font-size:14px;font-weight:bold;color:#0000ff;white-space:nowrap;line-height:normal;-webkit-text-stroke:0.35px #0000ff;">0</div>
<div id="tbcff02f4c6" class="a" style="left:1135px;top:869px;font-size:14px;font-weight:normal;color:#000;white-space:nowrap;line-height:normal;transform:scaleX(0.9952);transform-origin:left;-webkit-text-stroke:0.15px #000;">Trọng lượng (Kg)</div>
<div class="a" style="left:1246px;top:864px;width:121px;height:25px;border:1px solid #a8a8a8;background:#f4f4f4;"></div>
<div id="t7e621b1e03" class="a" style="left:7px;top:898px;font-size:14px;font-weight:normal;color:#000;white-space:nowrap;line-height:normal;transform:scaleX(1.0127);transform-origin:left;-webkit-text-stroke:0.15px #000;">Tổng cộng</div>
<div class="a" style="left:95px;top:893px;width:148px;height:25px;border:1px solid #a8a8a8;background:#f4f4f4;"></div>
<div id="t6c34ec4414" class="a" style="right:1682px;top:897px;font-size:14px;font-weight:bold;color:#ff0000;white-space:nowrap;line-height:normal;-webkit-text-stroke:0.35px #ff0000;">0</div>
<div class="a" style="left:247px;top:893px;width:666px;height:25px;border:1px solid #a8a8a8;background:#f4f4f4;"></div>
<div id="t1ea0678112" class="a" style="left:250px;top:897px;font-size:14px;font-weight:normal;color:#000;white-space:nowrap;line-height:normal;transform:scaleX(1.0496);transform-origin:left;-webkit-text-stroke:0.15px #000;">không</div>
<div id="t687c47980e" class="a" style="right:903px;top:898px;font-size:14px;font-weight:normal;color:#000;white-space:nowrap;line-height:normal;transform:scaleX(0.9946);transform-origin:right;-webkit-text-stroke:0.15px #000;">Phí vận chuyển</div>
<div class="a" style="left:1021px;top:893px;width:106px;height:25px;border:1px solid #a8a8a8;background:#fff;"></div>
<div id="te5397ddcb2" class="a" style="right:797px;top:897px;font-size:14px;font-weight:bold;color:#0000ff;white-space:nowrap;line-height:normal;-webkit-text-stroke:0.35px #0000ff;">0</div>
<div id="t896a037fa6" class="a" style="left:1131px;top:898px;font-size:14px;font-weight:normal;color:#000;white-space:nowrap;line-height:normal;transform:scaleX(0.9889);transform-origin:left;-webkit-text-stroke:0.15px #000;">Tổng tiền sau phí</div>
<div class="a" style="left:1246px;top:893px;width:121px;height:25px;border:1px solid #a8a8a8;background:#f4f4f4;"></div>
<div id="teddb59f54c" class="a" style="right:557px;top:897px;font-size:14px;font-weight:bold;color:#0000ff;white-space:nowrap;line-height:normal;-webkit-text-stroke:0.35px #0000ff;">0</div>
<div id="t891ed0eef4" class="a" style="left:7px;top:927px;font-size:14px;font-weight:normal;color:#000;white-space:nowrap;line-height:normal;transform:scaleX(1.0166);transform-origin:left;-webkit-text-stroke:0.15px #000;">Thanh toán</div>
<div class="a" style="left:95px;top:922px;width:148px;height:25px;border:1px solid #a8a8a8;background:#fff;"></div>
<div id="tcb76a44327" class="a" style="right:1682px;top:926px;font-size:14px;font-weight:bold;color:#0000ff;white-space:nowrap;line-height:normal;-webkit-text-stroke:0.35px #0000ff;">0</div>
<div id="t8c8c59d92b" class="a" style="right:1578px;top:927px;font-size:14px;font-weight:normal;color:#000;white-space:nowrap;line-height:normal;transform:scaleX(1.0127);transform-origin:right;-webkit-text-stroke:0.15px #000;">Quỹ</div>
<div class="a" style="left:347px;top:922px;width:780px;height:25px;border:1px solid #a8a8a8;background:#fff;"></div>
<div id="t61e7991a38" class="a" style="left:351px;top:926px;font-size:14px;font-weight:normal;color:#000;white-space:nowrap;line-height:normal;-webkit-text-stroke:0.15px #000;">Tiền mặt</div>
<svg class="a" style="left:1114px;top:932px;" width="8" height="5" viewBox="0 0 8 5"><path d="M0 0.5 H7 L3.5 4.5 Z" fill="#000"/></svg>
<div id="tf29673bae8" class="a" style="right:678px;top:927px;font-size:14px;font-weight:normal;color:#000;white-space:nowrap;line-height:normal;transform:scaleX(0.9880);transform-origin:right;-webkit-text-stroke:0.15px #000;">Còn nợ</div>
<div class="a" style="left:1246px;top:922px;width:121px;height:25px;border:1px solid #a8a8a8;background:#f4f4f4;"></div>
<div id="t981e1170f8" class="a" style="right:557px;top:926px;font-size:14px;font-weight:bold;color:#0000ff;white-space:nowrap;line-height:normal;-webkit-text-stroke:0.35px #0000ff;">0</div>
<div class="a" style="left:1375px;top:215px;width:537px;height:734px;border:3px solid #a8a8a8;background:#fff"></div>
<div id="te8aba6cc78" class="a" style="left:1383px;top:224px;font-size:11.5px;font-weight:bold;color:#858585;white-space:nowrap;line-height:normal;transform:scaleX(0.9498);transform-origin:left;-webkit-text-stroke:0.35px #858585;">DANH SÁCH PHIẾU</div>
<svg class="a" style="left:1871px;top:226px;" width="8" height="9" viewBox="0 0 8 9"><rect x="2" y="0" width="4" height="5" fill="#000"/><rect x="0.5" y="4.5" width="7" height="1.5" fill="#000"/><rect x="3.5" y="5" width="1.2" height="4" fill="#000"/></svg>
<svg class="a" style="left:1893px;top:226px;" width="10" height="8" viewBox="0 0 10 8"><path d="M1 0.8 L9 7.2 M9 0.8 L1 7.2" stroke="#000" stroke-width="2.2"/></svg>
<div class="a" style="left:1378px;top:241px;width:531px;height:1px;background:repeating-linear-gradient(90deg,#c4c4c4 0 3px,transparent 3px 6px)"></div>
<div id="tf75c7498d8" class="a" style="left:1383px;top:249px;font-size:14px;font-weight:normal;color:#000;white-space:nowrap;line-height:normal;transform:scaleX(0.9966);transform-origin:left;-webkit-text-stroke:0.15px #000;">Từ ngày</div>
<div id="t07e1adb419" class="a" style="left:1652px;top:249px;font-size:14px;font-weight:normal;color:#000;white-space:nowrap;line-height:normal;transform:scaleX(1.0180);transform-origin:left;-webkit-text-stroke:0.15px #000;">Đến ngày</div>
<div class="a" style="left:1382px;top:271px;width:267px;height:24px;border:1px solid #a8a8a8;background:#fff;"></div>
<div id="tf74ac41931" class="a" style="left:1385px;top:275px;font-size:14px;font-weight:normal;color:#000;white-space:nowrap;line-height:normal;transform:scaleX(1.0713);transform-origin:left;-webkit-text-stroke:0.15px #000;">01/10/2020</div>
<svg class="a" style="left:1636px;top:282px;" width="8" height="5" viewBox="0 0 8 5"><path d="M0 0.5 H7 L3.5 4.5 Z" fill="#000"/></svg>
<div class="a" style="left:1653px;top:271px;width:252px;height:24px;border:1px solid #a8a8a8;background:#fff;"></div>
<div id="t44e8a88690" class="a" style="left:1656px;top:275px;font-size:14px;font-weight:normal;color:#000;white-space:nowrap;line-height:normal;transform:scaleX(1.0713);transform-origin:left;-webkit-text-stroke:0.15px #000;">27/10/2023</div>
<svg class="a" style="left:1891px;top:282px;" width="8" height="5" viewBox="0 0 8 5"><path d="M0 0.5 H7 L3.5 4.5 Z" fill="#000"/></svg>
<div id="t657b60bb42" class="a" style="left:1381px;top:304px;font-size:14px;font-weight:normal;color:#000;white-space:nowrap;line-height:normal;transform:scaleX(0.9765);transform-origin:left;-webkit-text-stroke:0.15px #000;">Khách hàng</div>
<div class="a" style="left:1462px;top:299px;width:443px;height:24px;border:1px solid #a8a8a8;background:#fff;"></div>
<svg class="a" style="left:1873px;top:309px;" width="8" height="5" viewBox="0 0 8 5"><path d="M0 0.5 H7 L3.5 4.5 Z" fill="#000"/></svg>
<div id="t94945fd7aa" class="a" style="left:1381px;top:334px;font-size:14px;font-weight:normal;color:#000;white-space:nowrap;line-height:normal;transform:scaleX(0.9486);transform-origin:left;-webkit-text-stroke:0.15px #000;">Người lập</div>
<div class="a" style="left:1462px;top:329px;width:443px;height:24px;border:1px solid #a8a8a8;background:#fff;"></div>
<div id="teeeae5cd8e" class="a" style="left:1465px;top:333px;font-size:14px;font-weight:normal;color:#000;white-space:nowrap;line-height:normal;transform:scaleX(0.9942);transform-origin:left;-webkit-text-stroke:0.15px #000;">Administrator</div>
<svg class="a" style="left:1873px;top:339px;" width="8" height="5" viewBox="0 0 8 5"><path d="M0 0.5 H7 L3.5 4.5 Z" fill="#000"/></svg>
<svg class="a" style="left:0;top:0" width="1920" height="1040" viewBox="0 0 1920 1040"><path d="M1896.7 305 C1891.0 304.4 1888.3 307.5 1888.6 311.4 H1885.5 L1889.3 314.7 L1893.0 311.4 H1891.8 C1891.7 308.2 1893.3 306.4 1896.7 305 Z" fill="url(#grefr)"/><g transform="rotate(180 1893.5 311)"><path d="M1896.7 305 C1891.0 304.4 1888.3 307.5 1888.6 311.4 H1885.5 L1889.3 314.7 L1893.0 311.4 H1891.8 C1891.7 308.2 1893.3 306.4 1896.7 305 Z" fill="url(#grefr)"/></g><path d="M1896.7 335 C1891.0 334.4 1888.3 337.5 1888.6 341.4 H1885.5 L1889.3 344.7 L1893.0 341.4 H1891.8 C1891.7 338.2 1893.3 336.4 1896.7 335 Z" fill="url(#grefr)"/><g transform="rotate(180 1893.5 341)"><path d="M1896.7 335 C1891.0 334.4 1888.3 337.5 1888.6 341.4 H1885.5 L1889.3 344.7 L1893.0 341.4 H1891.8 C1891.7 338.2 1893.3 336.4 1896.7 335 Z" fill="url(#grefr)"/></g></svg>
<div class="a" style="left:1814px;top:358px;width:91px;height:24px;border:1px solid #a8a8a8;background:#fff;"></div>
<svg class="a" style="left:0;top:0" width="1920" height="1040"><rect x="1815" y="359" width="89" height="22" fill="url(#hp)"/></svg>
<svg class="a" style="left:0;top:0" width="1920" height="1040" viewBox="0 0 1920 1040"><circle cx="1825" cy="369" r="4.3" stroke="#222" stroke-width="2" fill="none"/><path d="M1828 372 L1832.5 376.5" stroke="#222" stroke-width="2.6" stroke-linecap="round"/></svg>
<div id="tc2360cb4c5" class="a" style="left:1838px;top:363px;font-size:14px;font-weight:bold;color:#0000ff;white-space:nowrap;line-height:normal;transform:scaleX(1.0217);transform-origin:left;-webkit-text-stroke:0.35px #0000ff;">Tìm kiếm</div>
<div class="a" style="left:1382px;top:386px;width:523px;height:557px;border:1px solid #a8a8a8;background:#fff;"></div>
<svg class="a" style="left:0;top:0" width="1920" height="1040"><rect x="1383" y="387" width="521" height="22" fill="url(#hp)"/></svg>
<div class="a" style="left:1382px;top:409px;width:523px;height:1px;background:#a8a8a8;"></div>
<div class="a" style="left:1404px;top:387px;width:1px;height:22px;background:#a8a8a8;"></div>
<div class="a" style="left:1495px;top:387px;width:1px;height:22px;background:#a8a8a8;"></div>
<div class="a" style="left:1598px;top:387px;width:1px;height:22px;background:#a8a8a8;"></div>
<div class="a" style="left:1753px;top:387px;width:1px;height:22px;background:#a8a8a8;"></div>
<div class="a" style="left:1828px;top:387px;width:1px;height:22px;background:#a8a8a8;"></div>
<svg class="a" style="left:0;top:0" width="1920" height="1040"><rect x="1383" y="410" width="21" height="169" fill="url(#hp)"/></svg>
<div class="a" style="left:1404px;top:410px;width:1px;height:169px;background:#a8a8a8;"></div>
<div class="a" style="left:1382px;top:437px;width:523px;height:2px;background:#a8a8a8;"></div>
<div class="a" style="left:1495px;top:410px;width:1px;height:27px;background:#d4d4d4;"></div>
<div class="a" style="left:1598px;top:410px;width:1px;height:27px;background:#d4d4d4;"></div>
<div class="a" style="left:1753px;top:410px;width:1px;height:27px;background:#d4d4d4;"></div>
<div class="a" style="left:1828px;top:410px;width:1px;height:27px;background:#d4d4d4;"></div>
<div id="tf9bedcfa24" class="a" style="left:1408px;top:390px;font-size:13px;font-weight:bold;color:#000;white-space:nowrap;line-height:normal;transform:scaleX(1.0529);transform-origin:left;-webkit-text-stroke:0.35px #000;">Ngày lập</div>
<div id="te16b5a7d3b" class="a" style="left:1500px;top:390px;font-size:13px;font-weight:bold;color:#000;white-space:nowrap;line-height:normal;transform:scaleX(1.0299);transform-origin:left;-webkit-text-stroke:0.35px #000;">Mã phiếu</div>
<div id="tc6159519d0" class="a" style="left:1603px;top:390px;font-size:13px;font-weight:bold;color:#000;white-space:nowrap;line-height:normal;transform:scaleX(0.8991);transform-origin:left;-webkit-text-stroke:0.35px #000;">Khách hàng</div>
<div id="tdebf9fa530" class="a" style="left:1758px;top:390px;font-size:13px;font-weight:bold;color:#000;white-space:nowrap;line-height:normal;transform:scaleX(1.0609);transform-origin:left;-webkit-text-stroke:0.35px #000;">Tổng tiền</div>
<div id="t9d18ae1bcc" class="a" style="left:1833px;top:390px;font-size:13px;font-weight:bold;color:#000;white-space:nowrap;line-height:normal;transform:scaleX(0.9707);transform-origin:left;-webkit-text-stroke:0.35px #000;">Ghi chú</div>
<svg class="a" style="left:0;top:0" width="1920" height="1040" viewBox="0 0 1920 1040"><rect x="1413" y="421.5" width="9" height="1.2" fill="#666"/><rect x="1413" y="424" width="9" height="1.2" fill="#666"/><rect x="1762" y="421.5" width="9" height="1.2" fill="#666"/><rect x="1762" y="424" width="9" height="1.2" fill="#666"/><g font-family="Liberation Mono" font-size="6.5" fill="#555"><text x="1500" y="427">A</text><rect x="1504" y="418" width="6" height="10.5" rx="1" fill="#13a333"/><text x="1504.7" y="426.5" fill="#fff">B</text><text x="1510.5" y="427">C</text></g><g font-family="Liberation Mono" font-size="6.5" fill="#555"><text x="1603" y="427">A</text><rect x="1607" y="418" width="6" height="10.5" rx="1" fill="#13a333"/><text x="1607.7" y="426.5" fill="#fff">B</text><text x="1613.5" y="427">C</text></g><g font-family="Liberation Mono" font-size="6.5" fill="#555"><text x="1833" y="427">A</text><rect x="1837" y="418" width="6" height="10.5" rx="1" fill="#13a333"/><text x="1837.7" y="426.5" fill="#fff">B</text><text x="1843.5" y="427">C</text></g><circle cx="1391" cy="421.5" r="2" fill="#111"/><rect x="1390.4" y="421" width="1.3" height="6" fill="#111"/></svg>
<div class="a" style="left:1405px;top:439px;width:499px;height:27px;background:#f3f3f3;"></div>
<div class="a" style="left:1496px;top:439px;width:102px;height:27px;background:linear-gradient(90deg,#ffff00,#ffffb8)"></div>
<div class="a" style="left:1383px;top:466px;width:521px;height:1px;background:#d4d4d4;"></div>
<div class="a" style="left:1495px;top:439px;width:1px;height:27px;background:#d4d4d4;"></div>
<div class="a" style="left:1598px;top:439px;width:1px;height:27px;background:#d4d4d4;"></div>
<div class="a" style="left:1753px;top:439px;width:1px;height:27px;background:#d4d4d4;"></div>
<div class="a" style="left:1828px;top:439px;width:1px;height:27px;background:#d4d4d4;"></div>
<div class="a" style="left:1383px;top:494px;width:521px;height:1px;background:#d4d4d4;"></div>
<div class="a" style="left:1495px;top:467px;width:1px;height:27px;background:#d4d4d4;"></div>
<div class="a" style="left:1598px;top:467px;width:1px;height:27px;background:#d4d4d4;"></div>
<div class="a" style="left:1753px;top:467px;width:1px;height:27px;background:#d4d4d4;"></div>
<div class="a" style="left:1828px;top:467px;width:1px;height:27px;background:#d4d4d4;"></div>
<div class="a" style="left:1383px;top:522px;width:521px;height:1px;background:#d4d4d4;"></div>
<div class="a" style="left:1495px;top:495px;width:1px;height:27px;background:#d4d4d4;"></div>
<div class="a" style="left:1598px;top:495px;width:1px;height:27px;background:#d4d4d4;"></div>
<div class="a" style="left:1753px;top:495px;width:1px;height:27px;background:#d4d4d4;"></div>
<div class="a" style="left:1828px;top:495px;width:1px;height:27px;background:#d4d4d4;"></div>
<div class="a" style="left:1383px;top:550px;width:521px;height:1px;background:#d4d4d4;"></div>
<div class="a" style="left:1495px;top:523px;width:1px;height:27px;background:#d4d4d4;"></div>
<div class="a" style="left:1598px;top:523px;width:1px;height:27px;background:#d4d4d4;"></div>
<div class="a" style="left:1753px;top:523px;width:1px;height:27px;background:#d4d4d4;"></div>
<div class="a" style="left:1828px;top:523px;width:1px;height:27px;background:#d4d4d4;"></div>
<div class="a" style="left:1383px;top:578px;width:521px;height:1px;background:#d4d4d4;"></div>
<div class="a" style="left:1495px;top:551px;width:1px;height:27px;background:#d4d4d4;"></div>
<div class="a" style="left:1598px;top:551px;width:1px;height:27px;background:#d4d4d4;"></div>
<div class="a" style="left:1753px;top:551px;width:1px;height:27px;background:#d4d4d4;"></div>
<div class="a" style="left:1828px;top:551px;width:1px;height:27px;background:#d4d4d4;"></div>
<div class="a" style="left:1383px;top:465px;width:21px;height:1px;background:#e6e6e6;"></div>
<svg class="a" style="left:1389px;top:446px;" width="6" height="10" viewBox="0 0 6 10"><path d="M0.5 0.5 L5 5 L0.5 9.5 Z" fill="#000"/></svg>
<div id="t67e481161f" class="a" style="left:1408px;top:444px;font-size:14px;font-weight:normal;color:#000;white-space:nowrap;line-height:normal;transform:scaleX(1.0713);transform-origin:left;-webkit-text-stroke:0.15px #000;">27/10/2023</div>
<div id="t9c42334d71" class="a" style="left:1500px;top:444px;font-size:14px;font-weight:bold;color:#ff0000;white-space:nowrap;line-height:normal;transform:scaleX(1.0865);transform-origin:left;-webkit-text-stroke:0.35px #ff0000;">KTH00005-..</div>
<div id="tfce98c6554" class="a" style="left:1602px;top:444px;font-size:14px;font-weight:normal;color:#000;white-space:nowrap;line-height:normal;transform:scaleX(0.9615);transform-origin:left;-webkit-text-stroke:0.15px #000;">Phòng Khám Bs Thái</div>
<div id="tffe6ede2fb" class="a" style="right:95px;top:444px;font-size:14px;font-weight:normal;color:#000;white-space:nowrap;line-height:normal;-webkit-text-stroke:0.15px #000;">10,800,...</div>
<div id="t2f291f9c77" class="a" style="left:1408px;top:472px;font-size:14px;font-weight:normal;color:#000;white-space:nowrap;line-height:normal;transform:scaleX(1.0713);transform-origin:left;-webkit-text-stroke:0.15px #000;">27/10/2023</div>
<div id="tdb81bdd29f" class="a" style="left:1499px;top:472px;font-size:14px;font-weight:normal;color:#000;white-space:nowrap;line-height:normal;transform:scaleX(0.9882);transform-origin:left;-webkit-text-stroke:0.15px #000;">KTH00004-2...</div>
<div id="t864eec2c05" class="a" style="left:1602px;top:472px;font-size:14px;font-weight:normal;color:#000;white-space:nowrap;line-height:normal;transform:scaleX(0.9634);transform-origin:left;-webkit-text-stroke:0.15px #000;">Phòng Khám Bs Nghiệp</div>
<div id="t01f810d401" class="a" style="right:95px;top:472px;font-size:14px;font-weight:normal;color:#000;white-space:nowrap;line-height:normal;-webkit-text-stroke:0.15px #000;">0</div>
<div id="t4bfc067896" class="a" style="left:1408px;top:500px;font-size:14px;font-weight:normal;color:#000;white-space:nowrap;line-height:normal;transform:scaleX(1.0713);transform-origin:left;-webkit-text-stroke:0.15px #000;">27/10/2023</div>
<div id="t1f8a24d246" class="a" style="left:1499px;top:500px;font-size:14px;font-weight:normal;color:#000;white-space:nowrap;line-height:normal;transform:scaleX(0.9882);transform-origin:left;-webkit-text-stroke:0.15px #000;">KTH00003-2...</div>
<div id="t2e36f45eed" class="a" style="left:1603px;top:500px;font-size:14px;font-weight:normal;color:#000;white-space:nowrap;line-height:normal;transform:scaleX(0.9739);transform-origin:left;-webkit-text-stroke:0.15px #000;">Trần Hoàng Sa</div>
<div id="te1aef780c5" class="a" style="right:95px;top:500px;font-size:14px;font-weight:normal;color:#000;white-space:nowrap;line-height:normal;-webkit-text-stroke:0.15px #000;">6,500</div>
<div id="t5a8e859437" class="a" style="left:1408px;top:528px;font-size:14px;font-weight:normal;color:#000;white-space:nowrap;line-height:normal;transform:scaleX(1.0713);transform-origin:left;-webkit-text-stroke:0.15px #000;">27/10/2023</div>
<div id="t8c2880fb13" class="a" style="left:1499px;top:528px;font-size:14px;font-weight:normal;color:#000;white-space:nowrap;line-height:normal;transform:scaleX(0.9882);transform-origin:left;-webkit-text-stroke:0.15px #000;">KTH00002-2...</div>
<div id="t49e5a255c7" class="a" style="left:1602px;top:528px;font-size:14px;font-weight:normal;color:#000;white-space:nowrap;line-height:normal;transform:scaleX(1.0120);transform-origin:left;-webkit-text-stroke:0.15px #000;">Nguyễn Văn Tám</div>
<div id="t72a528644e" class="a" style="right:95px;top:528px;font-size:14px;font-weight:normal;color:#000;white-space:nowrap;line-height:normal;-webkit-text-stroke:0.15px #000;">6,500</div>
<div id="t59e8c201b5" class="a" style="left:1408px;top:556px;font-size:14px;font-weight:normal;color:#000;white-space:nowrap;line-height:normal;transform:scaleX(1.0713);transform-origin:left;-webkit-text-stroke:0.15px #000;">19/07/2023</div>
<div id="tc990d299d4" class="a" style="left:1499px;top:556px;font-size:14px;font-weight:normal;color:#000;white-space:nowrap;line-height:normal;transform:scaleX(0.9882);transform-origin:left;-webkit-text-stroke:0.15px #000;">KTH00001-1...</div>
<div id="t750a283ca2" class="a" style="left:1602px;top:556px;font-size:14px;font-weight:normal;color:#000;white-space:nowrap;line-height:normal;transform:scaleX(0.9787);transform-origin:left;-webkit-text-stroke:0.15px #000;">Phòng Khám An Hòa</div>
<div id="teaecf74fee" class="a" style="right:95px;top:556px;font-size:14px;font-weight:normal;color:#000;white-space:nowrap;line-height:normal;-webkit-text-stroke:0.15px #000;">65,000</div>
<div class="a" style="left:1589px;top:457px;width:145px;height:27px;background:rgba(0,0,0,0.18);filter:blur(1.5px)"></div>
<div class="a" style="left:1586px;top:454px;width:146px;height:27px;border:1px solid #a0a0a0;background:#fff;"></div>
<div class="a" style="left:1588px;top:456px;width:142px;height:23px;border:1px solid #3a8ee6;background:#b9d7f3;"></div>
<svg class="a" style="left:0;top:0" width="1920" height="1040" viewBox="0 0 1920 1040"><path d="M1593 474 Q1597 466 1606 460 M1593 461 Q1600 466 1605 475" stroke="#e01010" stroke-width="2.2" fill="none" stroke-linecap="round"/></svg>
<div id="t4140e4a394" class="a" style="left:1623px;top:460px;font-size:14px;font-weight:bold;color:#ff0000;white-space:nowrap;line-height:normal;transform:scaleX(1.0166);transform-origin:left;-webkit-text-stroke:0.35px #ff0000;">Xóa phiếu</div>
<svg class="a" style="left:0;top:0" width="1920" height="1040" viewBox="0 0 1920 1040"><path d="M1695.5 469.5 V485 L1699 481.5 L1702 488 L1704.5 487 L1701.8 480.8 H1706.5 Z" fill="#fff" stroke="#000" stroke-width="1"/></svg>
<div class="a" style="left:1382px;top:890px;width:523px;height:1px;background:#a8a8a8;"></div>
<svg class="a" style="left:0;top:0" width="1920" height="1040"><rect x="1383" y="891" width="521" height="33" fill="url(#hp)"/></svg>
<div class="a" style="left:1497px;top:893px;width:102px;height:29px;border:1px dashed #c8c8c8;background:#fff"></div>
<div class="a" style="left:1755px;top:893px;width:73px;height:29px;border:1px dashed #c8c8c8;background:#fff"></div>
<div id="t8c06b8be5c" class="a" style="right:328px;top:901px;font-size:14px;font-weight:bold;color:#ff0000;white-space:nowrap;line-height:normal;transform:scaleX(1.0345);transform-origin:right;-webkit-text-stroke:0.35px #ff0000;">Có 5 phiếu</div>
<div id="tf54c094186" class="a" style="right:97px;top:901px;font-size:14px;font-weight:bold;color:#ff0000;white-space:nowrap;line-height:normal;transform:scaleX(1.1215);transform-origin:right;-webkit-text-stroke:0.35px #ff0000;">10,878...</div>
<div class="a" style="left:1383px;top:924px;width:521px;height:1px;background:repeating-linear-gradient(90deg,#c8c8c8 0 3px,transparent 3px 6px)"></div>
<div class="a" style="left:1383px;top:925px;width:521px;height:16px;background:#fff;"></div>
<div class="a" style="left:1400px;top:925px;width:373px;height:15px;border:1px solid #a8a8a8;background:#fff;"></div>
<svg class="a" style="left:0;top:0" width="1920" height="1040"><rect x="1401" y="926" width="371" height="13" fill="url(#hp)"/></svg>
<svg class="a" style="left:1389px;top:929px;" width="5" height="7" viewBox="0 0 5 7"><path d="M4.5 0 V7 L0.5 3.5 Z" fill="#000"/></svg>
<svg class="a" style="left:1893px;top:929px;" width="5" height="7" viewBox="0 0 5 7"><path d="M0.5 0 V7 L4.5 3.5 Z" fill="#000"/></svg>
<svg class="a" style="left:0;top:0" width="1920" height="1040"><rect x="2" y="952" width="576" height="51" fill="url(#hp)"/></svg>
<div class="a" style="left:2px;top:951px;width:576px;height:1px;background:repeating-linear-gradient(90deg,#b8b8b8 0 3px,transparent 3px 6px)"></div>
<div class="a" style="left:2px;top:952px;width:576px;height:1px;background:#c4c4c4;"></div>
<div class="a" style="left:2px;top:1003px;width:576px;height:1px;background:#a8a8a8;"></div>
<div class="a" style="left:2px;top:1005px;width:576px;height:1px;background:#a8a8a8;"></div>
<svg class="a" style="left:0;top:0" width="1920" height="1040" viewBox="0 0 1920 1040"><g transform="translate(14,967)"><rect x="0.5" y="0.5" width="23.2" height="23.3" rx="2" fill="#56637a" stroke="#3a4458"/><rect x="4" y="0.8" width="3" height="8.5" fill="#2e3648"/><rect x="7" y="0.8" width="10" height="8" fill="#dfe8f3"/><rect x="5" y="15" width="15" height="8.8" fill="#eef2f8"/><rect x="5" y="21" width="15" height="2.8" fill="#5a9ed8"/><path d="M13.5 0.6 H18.4 V-4.8 L28.5 3 L18.4 10.7 V5.6 H13.5 Z" fill="#9fd04a" stroke="#4e8a1e" stroke-width="1.1"/></g><g transform="translate(122,965)"><rect x="6.5" y="0.5" width="10" height="11" fill="#eef2f8" stroke="#7688aa"/><rect x="0.5" y="9.5" width="26" height="14.5" rx="2.5" fill="#dfe6f0" stroke="#7084a8"/><rect x="4" y="10" width="19" height="6" rx="2.5" fill="#4c5a78"/><rect x="6.5" y="20.5" width="14" height="6" fill="#fff" stroke="#6a7ea4"/><rect x="8" y="21.5" width="11" height="3.5" fill="#6aaee6"/><circle cx="22.5" cy="5.4" r="7.2" fill="#8cc63e" stroke="#5a8e26" stroke-width="0.8"/><text x="22.5" y="9.6" font-size="11.5" font-weight="bold" fill="#2a5a10" text-anchor="middle" font-family="Liberation Sans">?</text></g><g transform="translate(244,965)"><rect x="6.5" y="0.5" width="10" height="11" fill="#eef2f8" stroke="#7688aa"/><rect x="0.5" y="9.5" width="26" height="14.5" rx="2.5" fill="#dfe6f0" stroke="#7084a8"/><rect x="4" y="10" width="19" height="6" rx="2.5" fill="#4c5a78"/><rect x="6.5" y="20.5" width="14" height="6" fill="#fff" stroke="#6a7ea4"/><rect x="8" y="21.5" width="11" height="3.5" fill="#6aaee6"/><circle cx="22.5" cy="5.4" r="7.2" fill="#8cc63e" stroke="#5a8e26" stroke-width="0.8"/><text x="22.5" y="9.6" font-size="11.5" font-weight="bold" fill="#2a5a10" text-anchor="middle" font-family="Liberation Sans">?</text></g><rect x="368.5" y="974.5" width="12" height="9" fill="none" stroke="#9a9a9a"/><path d="M370.5 979 L374 983.5 L381.5 970" stroke="#000" stroke-width="1.8" fill="none"/><path d="M454.5 969.5 L471.5 986.5 M471.5 969.5 L454.5 986.5" stroke="#a8241c" stroke-width="6.4" stroke-linecap="round"/><path d="M454.5 969.5 L471.5 986.5 M471.5 969.5 L454.5 986.5" stroke="#e05545" stroke-width="3.6" stroke-linecap="round"/><path d="M556.5 975.5 H562.5 A4.4 4.4 0 0 1 562.5 984.3 H559" stroke="#4a86c4" stroke-width="2.6" fill="none"/><path d="M552.5 975.5 L558 970.5 V980.5 Z" fill="#4a86c4"/></svg>
<div id="td4de22548d" class="a" style="left:47px;top:970px;font-size:14px;font-weight:bold;color:#0000ff;white-space:nowrap;line-height:normal;transform:scaleX(1.0539);transform-origin:left;-webkit-text-stroke:0.35px #0000ff;">LƯU (F2)</div>
<div id="t409df798e4" class="a" style="left:157px;top:970px;font-size:14px;font-weight:bold;color:#0000ff;white-space:nowrap;line-height:normal;transform:scaleX(1.1750);transform-origin:left;-webkit-text-stroke:0.35px #0000ff;">IN A4 (F6)</div>
<div id="te32df807c2" class="a" style="left:279px;top:970px;font-size:14px;font-weight:bold;color:#0000ff;white-space:nowrap;line-height:normal;transform:scaleX(1.1144);transform-origin:left;-webkit-text-stroke:0.35px #0000ff;">IN A4KCN</div>
<div id="t9882ebfb7e" class="a" style="left:382px;top:970px;font-size:14px;font-weight:bold;color:#000;white-space:nowrap;line-height:normal;transform:scaleX(1.1221);transform-origin:left;-webkit-text-stroke:0.35px #000;">XEM IN</div>
<div id="t62d62e5419" class="a" style="left:483px;top:970px;font-size:14px;font-weight:bold;color:#ff0000;white-space:nowrap;line-height:normal;transform:scaleX(1.0589);transform-origin:left;-webkit-text-stroke:0.35px #ff0000;">THOÁT</div>
<div class="a" style="left:542px;top:958px;width:1px;height:39px;background:repeating-linear-gradient(180deg,#c8c8c8 0 1px,transparent 1px 2px)"></div>
<div class="a" style="left:0px;top:1013px;width:1920px;height:1px;background:repeating-linear-gradient(90deg,#b8b8b8 0 3px,transparent 3px 6px)"></div>
<div id="t18ecfdcb4f" class="a" style="left:8px;top:1022px;font-size:11.5px;font-weight:bold;color:#000;white-space:nowrap;line-height:normal;transform:scaleX(1.0224);transform-origin:left;-webkit-text-stroke:0.35px #000;">Chào mừng: Administrator đến với phần mềm MekongSoft</div>
<div class="a" style="left:349px;top:1022px;width:1px;height:11px;background:#a9bed6;"></div>
<div id="t5e79ab6419" class="a" style="left:362px;top:1022px;font-size:11.5px;font-weight:bold;color:#000;white-space:nowrap;line-height:normal;transform:scaleX(1.0389);transform-origin:left;-webkit-text-stroke:0.35px #000;">Version: 4.2.0</div>
<div class="a" style="left:452px;top:1022px;width:1px;height:11px;background:#a9bed6;"></div>
<div id="t0d162e08ea" class="a" style="left:466px;top:1022px;font-size:11.5px;font-weight:bold;color:#ff0000;white-space:nowrap;line-height:normal;transform:scaleX(1.0626);transform-origin:left;-webkit-text-stroke:0.35px #ff0000;">Ngày: 27/10/2023 3:51:47 CH</div>
<div class="a" style="left:1613px;top:1016px;width:1px;height:24px;background:repeating-linear-gradient(180deg,#b8b8b8 0 3px,transparent 3px 6px)"></div>
<div id="t5f2a281eb9" class="a" style="left:1624px;top:1022px;font-size:11.5px;font-weight:bold;color:#000;white-space:nowrap;line-height:normal;transform:scaleX(1.0330);transform-origin:left;-webkit-text-stroke:0.35px #000;">@2023 MekongSoft. Thông tin hỗ trợ: 0901 000 508</div>
</body></html>
